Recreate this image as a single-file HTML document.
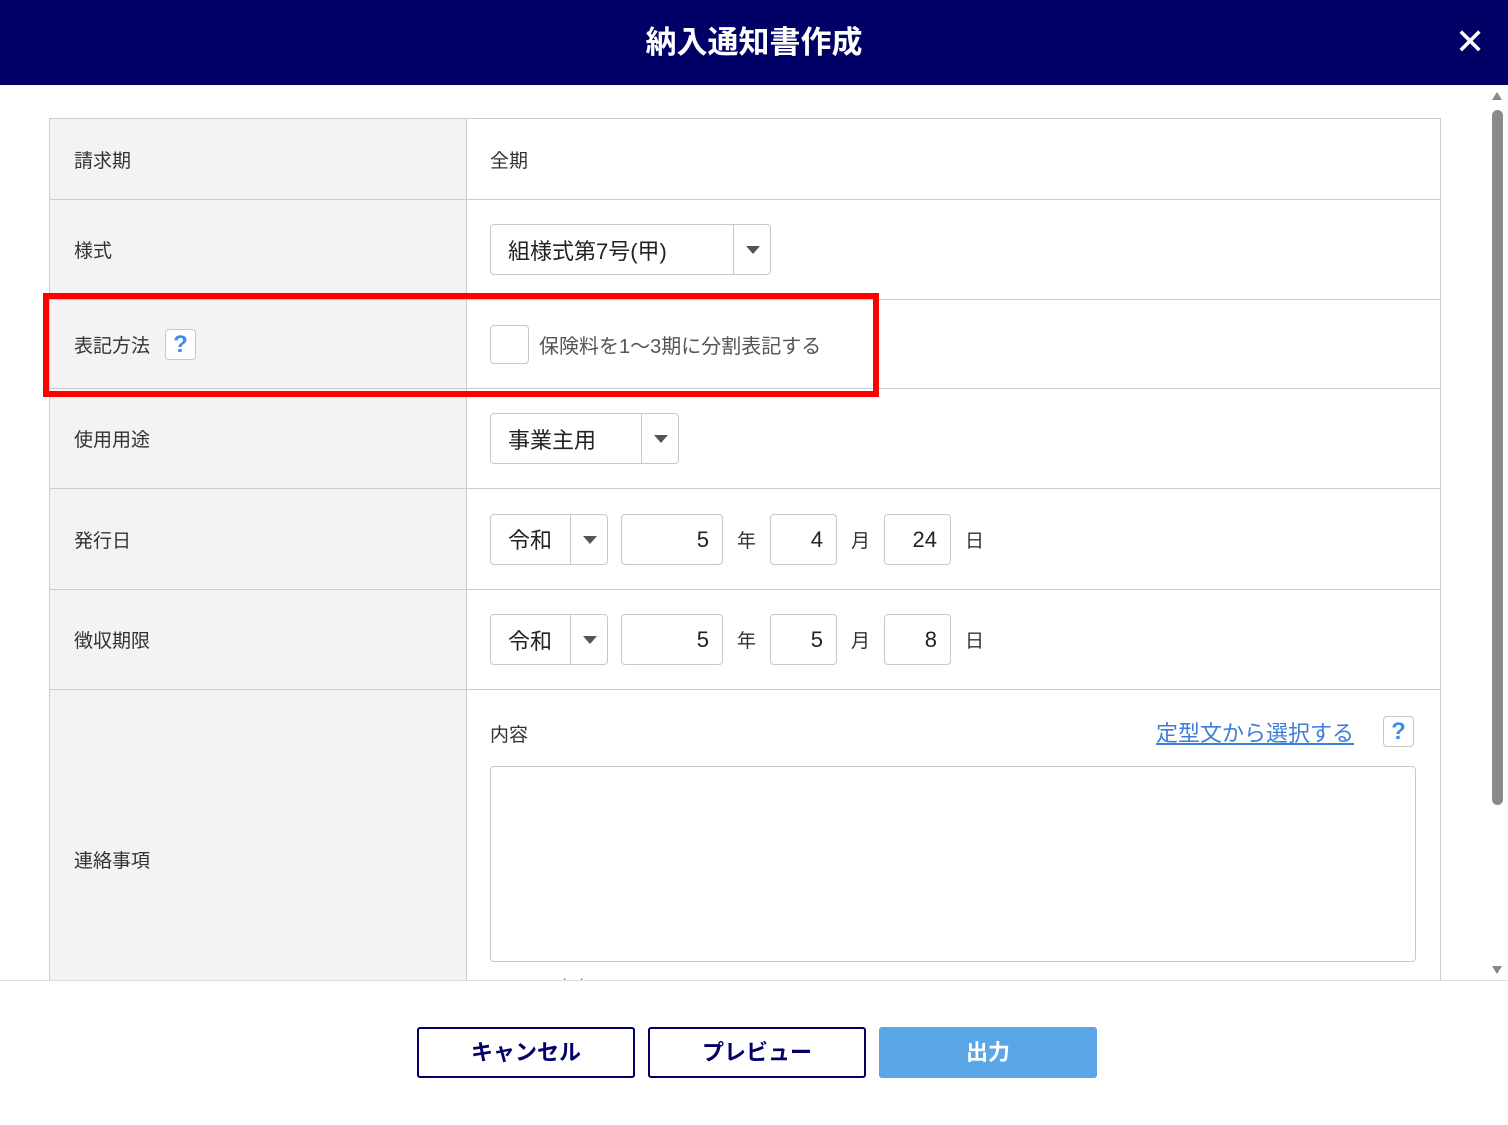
<!DOCTYPE html>
<html><head><meta charset="utf-8"><style>
*{box-sizing:border-box;margin:0;padding:0}
body{width:1508px;height:1125px;position:relative;background:#fff;font-family:"Liberation Sans","Noto Sans CJK JP",sans-serif;color:#333;overflow:hidden}
.a{position:absolute}
.hdr{left:0;top:0;width:1508px;height:85px;background:#000066;color:#fff;font-size:31px;text-align:center;line-height:85px;font-weight:bold}
.lbl{left:49px;width:418px;background:#f3f3f3;border:1px solid #ccc;border-right:1px solid #ccc;font-size:19px;padding-left:24px;display:flex;align-items:center}
.val{left:466px;width:975px;border:1px solid #ccc;border-left:none;font-size:19px;padding-left:24px;display:flex;align-items:center}
.box{border:1px solid #c8c8c8;border-radius:4px;background:#fff;font-size:22px;color:#222}
.sel{display:flex;align-items:center;height:51px}
.sel span{padding-left:17px;flex:1}
.sel i{width:37px;height:100%;border-left:1px solid #c8c8c8;position:relative}
.sel i:after{content:"";position:absolute;left:12px;top:21px;border-left:7px solid transparent;border-right:7px solid transparent;border-top:8px solid #555}
.num{height:51px;text-align:right;padding-right:13px;line-height:49px}
.q{width:31px;height:31px;border:1px solid #c8c8c8;border-radius:4px;color:#3c8ee8;font-size:24px;text-align:center;line-height:29px;font-weight:bold;background:#fff}
.btn{top:1027px;width:218px;height:51px;border:2px solid #000066;border-radius:3px;font-size:22px;font-weight:bold;text-align:center;line-height:47px;color:#000066;background:#fff}
</style></head><body>
<div class="a hdr">納入通知書作成</div>
<div class="a" style="left:1455px;top:22px;color:#fff;font-size:36px;line-height:40px">✕</div>

<div class="a" style="left:0;top:85px;width:1508px;height:895px;overflow:hidden">
<div style="position:absolute;left:0;top:-85px;width:1508px;height:1100px">
<div class="a lbl" style="top:118px;height:82px">請求期</div>
<div class="a val" style="top:118px;height:82px;border-top:1px solid #ccc">全期</div>
<div class="a lbl" style="top:199px;height:101px">様式</div>
<div class="a val" style="top:199px;height:101px"><div class="box sel" style="width:281px"><span>組様式第7号(甲)</span><i></i></div></div>
<div class="a lbl" style="top:299px;height:90px">表記方法<div class="q" style="margin-left:15px">?</div></div>
<div class="a val" style="top:299px;height:90px"><div class="box" style="width:39px;height:39px;margin-right:10px"></div><span style="color:#555;font-size:20px">保険料を1～3期に分割表記する</span></div>
<div class="a lbl" style="top:388px;height:101px">使用用途</div>
<div class="a val" style="top:388px;height:101px"><div class="box sel" style="width:189px"><span>事業主用</span><i></i></div></div>
<div class="a lbl" style="top:488px;height:102px">発行日</div>
<div class="a val" style="top:488px;height:102px">
<div class="box sel" style="width:118px"><span>令和</span><i></i></div>
<div class="box num" style="width:102px;margin-left:13px">5</div><span style="margin:0 14px">年</span>
<div class="box num" style="width:67px">4</div><span style="margin:0 14px">月</span>
<div class="box num" style="width:67px">24</div><span style="margin-left:14px">日</span></div>
<div class="a lbl" style="top:589px;height:101px">徴収期限</div>
<div class="a val" style="top:589px;height:101px">
<div class="box sel" style="width:118px"><span>令和</span><i></i></div>
<div class="box num" style="width:102px;margin-left:13px">5</div><span style="margin:0 14px">年</span>
<div class="box num" style="width:67px">5</div><span style="margin:0 14px">月</span>
<div class="box num" style="width:67px">8</div><span style="margin-left:14px">日</span></div>
<div class="a lbl" style="top:689px;height:340px">連絡事項</div>
<div class="a val" style="top:689px;height:340px;display:block">
<div class="a" style="left:24px;top:30px;font-size:19px">内容</div>
<div class="a" style="left:690px;top:26px;font-size:22px;color:#3c7dd8;text-decoration:underline">定型文から選択する</div>
<div class="a q" style="left:917px;top:26px">?</div>
<div class="a box" style="left:24px;top:76px;width:926px;height:196px"></div>
<div class="a" style="left:24px;top:283px;font-size:17px;color:#777">0 / 1070 文字</div>
</div>
<div class="a" style="left:1492px;top:110px;width:11px;height:695px;background:#8a8a8a;border-radius:6px"></div>
</div></div>
<div class="a" style="left:1492px;top:92px;border-left:5px solid transparent;border-right:5px solid transparent;border-bottom:8px solid #888"></div>
<div class="a" style="left:1492px;top:966px;border-left:5px solid transparent;border-right:5px solid transparent;border-top:8px solid #888"></div>
<div class="a" style="left:43px;top:293px;width:836px;height:104px;border:6px solid #f00"></div>
<div class="a" style="left:0;top:980px;width:1508px;height:1px;background:#ddd"></div>
<div class="a btn" style="left:417px">キャンセル</div>
<div class="a btn" style="left:648px">プレビュー</div>
<div class="a btn" style="left:879px;background:#5aa6e6;border-color:#5aa6e6;color:#fff">出力</div>
</body></html>
